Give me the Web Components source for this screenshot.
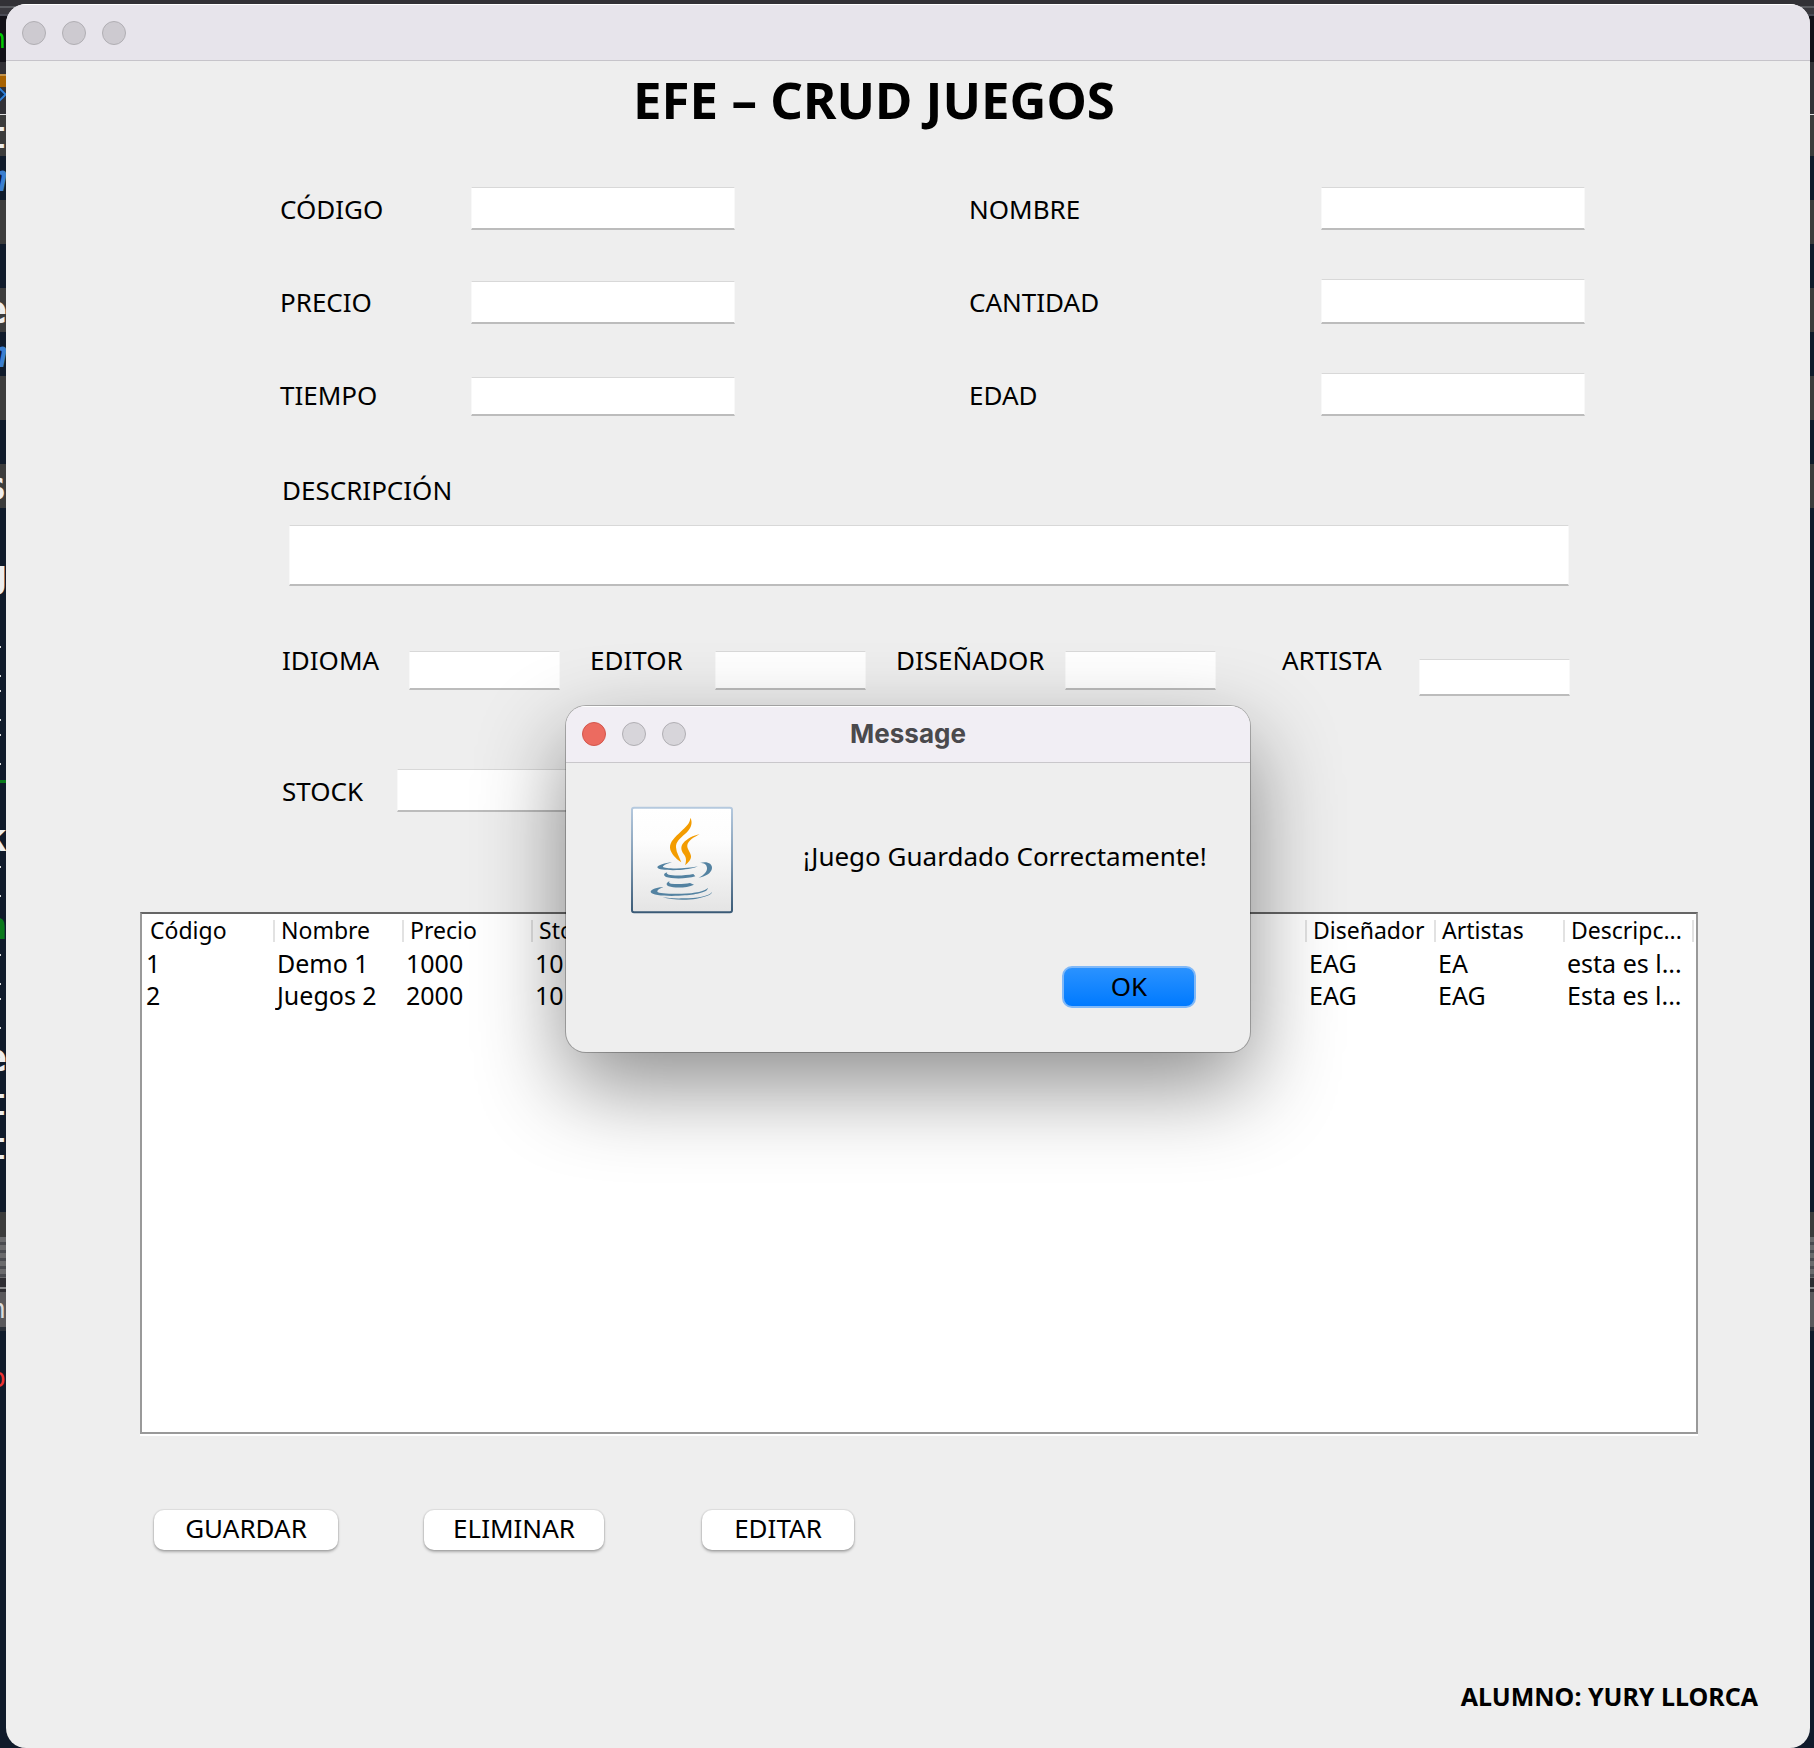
<!DOCTYPE html>
<html lang="es">
<head>
<meta charset="utf-8">
<meta name="viewport" content="width=device-width, initial-scale=1">
<title>EFE – CRUD JUEGOS</title>
<style>
  html, body { margin: 0; min-height: 100%; background: #101b2b; }
  body { font: 26px/36px "Noto Sans", "Open Sans", sans-serif; color: #000; }
</style>
</head>
<body>
<crud-desktop></crud-desktop>

<script>
const define = (name, html, setup) => {
  const template = document.createElement('template');
  template.innerHTML = html;
  customElements.define(name, class extends HTMLElement {
    constructor() {
      super();
      this.attachShadow({ mode: 'open' }).append(template.content.cloneNode(true));
    }
    connectedCallback() { if (setup) setup(this, this.shadowRoot); }
  });
};

/* Editor window lying behind, seen only at the edges */
define('editor-backdrop', `
  <style>
    :host { display: block; overflow: hidden; background: #101b2b; }
    .line { display: flex; justify-content: space-between; overflow: hidden; }
    .edge { display: flex; justify-content: flex-end; flex: none; width: 6px; overflow: hidden;
            font: 700 38px/44px "DejaVu Sans Mono", monospace; }
    .glyph { flex: none; margin-right: -1px; }
    .kw { font-style: italic; }
    .small { font-size: 26px; font-weight: 400; margin-right: 0; }
    .ticks { flex: none; width: 1px; height: 27px; margin: 6px 5px 0 0; border: solid #ddd; border-width: 2px 0; }
    .tag { flex: none; width: 15px; height: 15px; margin: 0 2px 0 0; transform: rotate(45deg);
           box-sizing: border-box; background: #0c2a50; border: 2px solid #2f7fd6; }
  </style>`, (host, root) => {
  const grey = '#3c3c3c', navy = '#101b2b';
  const lines = [
    [6, '#323136'], [2, '#5a5b60'], [6, '#3a393f'], [2, '#4a4b55'],
    [46, '#121118', 'n', '#0c0', 'small'],
    [12, '#323136'], [2, '#323136', '', '', '', '#c2924a'], [11, '#323136', '', '', '', '#a86200'],
    [27, '#323136', '', '', 'tag'], [1, '#dcdcdc'], [41, grey, 't', '#eee'],
    [44, navy, 'm', '#3b7fd0', 'kw'], [44, grey], [44, navy], [44, grey, 'e', '#eee'],
    [44, navy, 'm', '#3b7fd0', 'kw'], [44, grey], [44, navy], [44, grey, 's', '#eee'],
    [44, navy], [44, navy, 'g', '#eee'], [44, navy], [44, navy, '', '', 'ticks'],
    [44, navy, '', '', 'ticks'], [44, navy, '', '', 'ticks'],
    [8, navy], [3, '#0a7a1c', '', '', '', '#0a7a1c', true], [33, navy],
    [44, navy, 'k', '#eee'], [44, navy, '', '', 'ticks'], [44, navy, 'a', '#0a7a1c'],
    [44, navy, '', '', 'ticks'], [44, navy, '', '', 'ticks'], [44, navy, 'e', '#eee'],
    [44, navy, 't', '#eee'], [44, navy, 't', '#eee'], [44, navy],
    [25, grey], [41, 'repeating-linear-gradient(#6a6a6c 0 5px, #4a4b50 5px 8px)'],
    [9, '#2e2d32'], [2, '#8a8a8c'], [3, '#2e2d32'],
    [35, '#5a595c', 'n', '#ddd', 'small'], [4, '#2b3038'], [25, navy],
    [44, navy, 'o', '#e33', 'small']
  ];
  for (const [h, bg, ch, color, kind, edgeBg, leftOnly] of lines) {
    const line = document.createElement('div');
    line.className = 'line';
    line.style.height = h + 'px';
    line.style.background = leftOnly ? navy : bg;
    const edge = document.createElement('span');
    edge.className = 'edge';
    edge.setAttribute('aria-hidden', 'true');
    edge.style.lineHeight = h + 'px';
    if (edgeBg) edge.style.background = edgeBg;
    const g = document.createElement('span');
    g.className = ch ? 'glyph ' + (kind || '') : kind || '';
    if (ch) { g.textContent = ch; g.style.color = color; }
    if (ch || kind) edge.append(g);
    line.append(edge);
    root.append(line);
  }
});

define('window-lights', `
  <style>
    :host { display: flex; gap: 16px; }
    i { box-sizing: border-box; width: 24px; height: 24px; border-radius: 50%;
        background: var(--light, #cdcad0); border: 1px solid #b0aeb3; }
    i:first-of-type { background: var(--first, var(--light, #cdcad0)); border-color: var(--first-edge, #b0aeb3); }
  </style><i></i><i></i><i></i>`);

define('game-field', `
  <style>
    :host { display: grid; grid-template-columns: var(--cols, minmax(0,191fr) minmax(0,264fr)); height: var(--row, auto); }
    label { align-self: var(--label-align, center); white-space: nowrap; }
    input { align-self: end; box-sizing: border-box; width: 100%; min-width: 0; height: var(--box, 43px);
            margin: 0; padding: 0 8px; border: 1px solid #f8f8f8; border-top-color: #d8d8d8;
            border-bottom: 2px solid #bcbcbc; border-radius: 0; background: #fff; font: inherit; outline: 0; }
  </style>
  <label for="box"></label><input id="box" type="text">`, (host, root) => {
  root.querySelector('label').textContent = host.getAttribute('label');
});

define('game-form', `
  <style>
    :host { display: block; }
    .row { display: grid; align-items: start; }
    .pair { grid-template-columns: 274fr 455fr 234fr 616fr 225fr; align-items: stretch; margin-bottom: 49px; }
    .pair > :first-child { grid-column: 2; }
    .pair > :last-child { grid-column: 4; --cols: minmax(0,352fr) minmax(0,264fr); }
    .desc { grid-template-columns: 276fr 7fr 1280fr 241fr; row-gap: 17px; margin-top: 56px; }
    .desc label { grid-column: 2 / 4; }
    .desc input { grid-column: 3; box-sizing: border-box; width: 100%; height: 61px; margin: 0; padding: 0 8px;
                  border: 1px solid #f8f8f8; border-top-color: #d8d8d8; border-bottom: 2px solid #bcbcbc;
                  border-radius: 0; background: #fff; font: inherit; outline: 0; }
    .credits { grid-template-columns: 276fr 278fr 30fr 276fr 30fr 320fr 66fr 288fr 240fr; margin-top: 56px;
               --row: 48px; --box: 39px; --label-align: start; }
    .credits > :nth-child(1) { grid-column: 2; --cols: minmax(0,127fr) minmax(0,151fr); }
    .credits > :nth-child(2) { grid-column: 4; --cols: minmax(0,125fr) minmax(0,151fr); }
    .credits > :nth-child(3) { grid-column: 6; --cols: minmax(0,169fr) minmax(0,151fr); }
    .credits > :nth-child(4) { grid-column: 8; --cols: minmax(0,137fr) minmax(0,151fr); --row: 54px; --box: 37px; }
    .stock { grid-template-columns: 276fr 379fr 1149fr; margin-top: 73px; }
    .stock > * { grid-column: 2; --cols: minmax(0,115fr) minmax(0,264fr); }
    .last { margin-bottom: 0; }
  </style>
  <div class="row pair"><game-field label="CÓDIGO"></game-field><game-field label="NOMBRE"></game-field></div>
  <div class="row pair"><game-field label="PRECIO"></game-field><game-field label="CANTIDAD" style="--box:45px"></game-field></div>
  <div class="row pair last"><game-field label="TIEMPO" style="--box:39px"></game-field><game-field label="EDAD"></game-field></div>
  <div class="row desc"><label for="desc">DESCRIPCIÓN</label><input id="desc" type="text"></div>
  <div class="row credits">
    <game-field label="IDIOMA"></game-field><game-field label="EDITOR"></game-field>
    <game-field label="DISEÑADOR"></game-field><game-field label="ARTISTA"></game-field>
  </div>
  <div class="row stock"><game-field label="STOCK"></game-field></div>`);

define('game-table', `
  <style>
    :host { display: block; box-sizing: border-box; height: 522px; background: #fff; border: 2px solid #999;
            border-top-color: #666; box-shadow: 0 2px #fff; padding-right: 2px; overflow: hidden; }
    table { width: 100%; table-layout: fixed; border-collapse: collapse; font-size: 25px; }
    th, td { padding: 0 0 0 2px; text-align: left; font-weight: 400; white-space: nowrap; overflow: hidden; height: 32px; line-height: 32px; }
    th { height: 33px; padding: 0 0 2px 6px; box-sizing: border-box; line-height: 30px; font-size: 23px;
         background: linear-gradient(#e2e2e2, #e2e2e2) no-repeat right center / 2px 22px; }
    th:first-child { width: 133px; padding-left: 8px; }
    td:first-child { padding-left: 4px; }
  </style>
  <table><thead></thead><tbody></tbody></table>`, (host, root) => {
  const row = (cells, tag) => {
    const tr = document.createElement('tr');
    for (const text of cells) {
      const cell = document.createElement(tag);
      cell.textContent = text;
      tr.append(cell);
    }
    return tr;
  };
  root.querySelector('thead').append(row(['Código', 'Nombre', 'Precio', 'Stock', '', '', '', '', '', 'Diseñador', 'Artistas', 'Descripc...'], 'th'));
  root.querySelector('tbody').append(
    row(['1', 'Demo 1', '1000', '10', '', '', '', '', '', 'EAG', 'EA', 'esta es l...'], 'td'),
    row(['2', 'Juegos 2', '2000', '10', '', '', '', '', '', 'EAG', 'EAG', 'Esta es l...'], 'td'));
});

define('push-button', `
  <style>
    :host { display: block; }
    button { display: block; box-sizing: border-box; width: 100%; height: 40px; margin: 0; padding: 0 0 4px;
             border: 0; border-radius: 10px; background: #fff; color: #000; font: inherit; line-height: 36px;
             box-shadow: 0 0 1px 1px rgba(0,0,0,.07), 0 2px 3px rgba(0,0,0,.28); }
    :host([primary]) button { height: 42px; border: 2px solid #7fb8f8; background: linear-gradient(#2a92ff, #007aff); box-shadow: none; }
  </style>
  <button type="button"><slot></slot></button>`);

define('java-icon', `
  <style>:host { display: block; } svg { display: block; width: 104px; height: 108px; }</style>
  <svg viewBox="90 78 312 324" aria-hidden="true">
    <defs>
      <linearGradient id="face" x1="0" y1="0" x2="0" y2="1"><stop offset="0" stop-color="#fff"/><stop offset=".3" stop-color="#fdfdfd"/><stop offset="1" stop-color="#e4e4e4"/></linearGradient>
      <linearGradient id="edge" x1="0" y1="0" x2="0" y2="1"><stop offset="0" stop-color="#b5c9de"/><stop offset=".5" stop-color="#7f9ab3"/><stop offset="1" stop-color="#3a5a76"/></linearGradient>
    </defs>
    <rect x="96" y="83" width="300" height="314" rx="6" fill="url(#face)" stroke="url(#edge)" stroke-width="6"/>
    <g fill="#f39c00">
      <path d="M271 113C280 130 272 147 255 162C240 175 227 186 228 202C229 218 238 232 244 247C226 235 211 218 210 203C209 185 226 170 242 155C260 138 270 130 271 113Z"/>
      <path d="M299 163C280 166 262 176 250 189C241 199 243 212 251 222C259 232 260 242 255 256C265 248 274 238 273 228C271 215 260 207 262 195C265 181 283 171 299 163Z"/>
    </g>
    <g fill="#5382a1">
      <path d="M216 247C195 249 172 256 172 262C173 271 215 271 240 270C262 268 285 264 294 259C270 264 235 267 212 265C196 264 185 262 190 258C195 253 207 250 216 247Z"/>
      <path d="M300 249C320 242 337 250 336 264C335 280 315 290 296 293C311 286 322 275 321 264C320 252 312 249 300 249Z"/>
      <path d="M202 277C190 280 190 287 198 291C215 297 262 297 286 289L280 282C255 287 222 288 206 284C200 282 199 280 202 277Z"/>
      <path d="M209 304C197 308 198 316 206 319C225 325 262 324 282 314L270 309C252 313 228 313 213 311C207 310 206 307 209 304Z"/>
      <path d="M190 322C170 321 152 329 152 336C156 349 220 349 255 346C290 343 326 336 323 323C318 333 285 340 245 341C210 342 175 340 172 335C172 329 182 325 190 322Z"/>
      <path d="M336 336C328 348 290 355 250 355C225 356 200 354 187 351C215 361 260 361 290 356C315 351 336 345 336 336Z"/>
    </g>
  </svg>`);

define('message-dialog', `
  <style>
    :host { display: block; box-sizing: border-box; width: 684px; height: 346px; border-radius: 20px; background: #eee;
            box-shadow: 0 0 0 1px rgba(0,0,0,.25), 0 34px 88px rgba(0,0,0,.45); overflow: hidden; }
    header { display: grid; grid-template-columns: 1fr auto 1fr; align-items: center; box-sizing: border-box; height: 57px;
             padding: 0 16px 2px; background: #f1eef4; border-top: 1px solid #fff; border-bottom: 1px solid #c9c7cb;
             --light: #d7d5da; --first: #ec6b60; --first-edge: #d2564c; }
    h2 { margin: 0; font: 700 26px/32px Inter, "Liberation Sans", sans-serif; color: #4a494c; }
    .body { display: grid; grid-template-columns: 104px 1fr; column-gap: 69px; padding: 43px 36px 0 64px; }
    p { margin: 32px 0 0; white-space: nowrap; }
    .actions { display: flex; justify-content: flex-end; padding: 52px 54px 0 0; }
    push-button { width: 134px; }
  </style>
  <header><window-lights></window-lights><h2>Message</h2></header>
  <div class="body"><java-icon></java-icon><p>¡Juego Guardado Correctamente!</p></div>
  <div class="actions"><push-button primary>OK</push-button></div>`,
  host => { host.setAttribute('role', 'dialog'); host.setAttribute('aria-label', 'Message'); });

define('app-window', `
  <style>
    :host { display: flex; flex-direction: column; position: relative; background: #eee; border-radius: 20px; overflow: hidden; }
    header { display: flex; align-items: center; box-sizing: border-box; height: 57px; flex: none; padding: 0 16px;
             background: #e7e4eb; border-top: 1px solid #fff; border-bottom: 1px solid #c6c4ca; }
    h1 { margin: 0 0 50px; padding-right: 68px; text-align: center; font-size: 51px; line-height: 76px; font-weight: 700; }
    .table { display: grid; grid-template-columns: 134fr minmax(0,1558fr) 112fr; margin-top: 100px; }
    game-table { grid-column: 2; }
    .buttons { display: grid; grid-template-columns: 148fr 184fr 86fr 180fr 98fr 152fr 956fr; margin-top: 76px; }
    .buttons > :nth-child(1) { grid-column: 2; }
    .buttons > :nth-child(2) { grid-column: 4; }
    .buttons > :nth-child(3) { grid-column: 6; }
    footer { margin-top: auto; padding: 0 52px 34px 0; text-align: right; font-size: 25px; font-weight: 700; }
    /* the dialog floats over the form, centred across the window */
    message-dialog { position: absolute; top: 702px; left: calc(50% - 342px); }
  </style>
  <header><window-lights></window-lights></header>
  <h1>EFE – CRUD JUEGOS</h1>
  <game-form></game-form>
  <div class="table"><game-table></game-table></div>
  <div class="buttons"><push-button>GUARDAR</push-button><push-button>ELIMINAR</push-button><push-button>EDITAR</push-button></div>
  <footer>ALUMNO: YURY LLORCA</footer>
  <message-dialog></message-dialog>`);

define('crud-desktop', `
  <style>
    :host { display: grid; min-height: 100vh; }
    editor-backdrop, app-window { grid-area: 1 / 1; }
    editor-backdrop { height: 100%; max-height: 100vh; }
    app-window { margin: 4px 4px 0 6px; }
  </style>
  <editor-backdrop></editor-backdrop>
  <app-window></app-window>`);
</script>
</body>
</html>
